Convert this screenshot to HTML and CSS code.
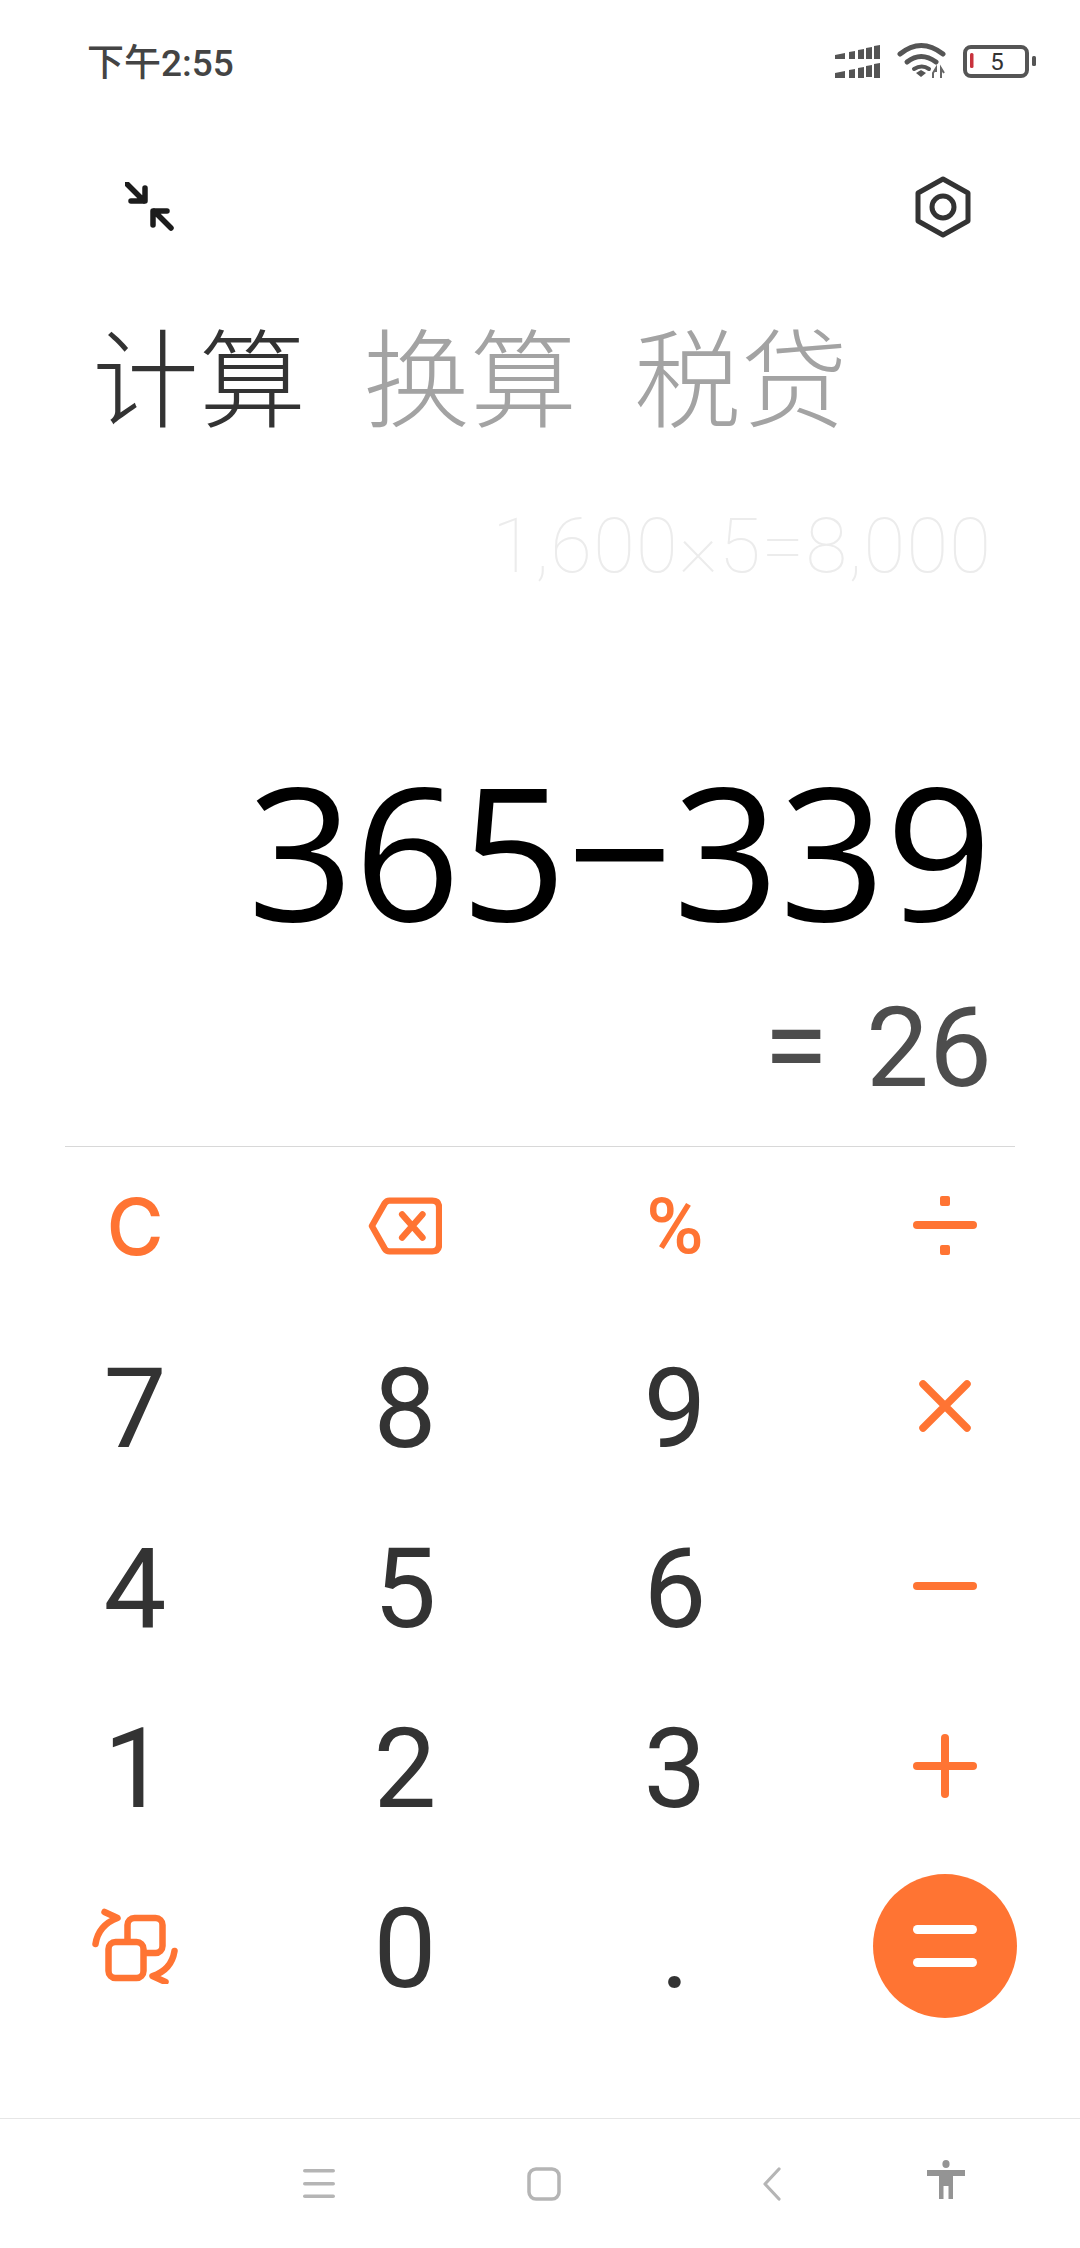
FILE: index.html
```html
<!DOCTYPE html>
<html lang="zh-CN">
<head>
    <meta charset="UTF-8">
    <meta name="viewport" content="width=device-width, initial-scale=1.0">
    <title>计算器</title>
    <link rel="stylesheet" href="styles.css">
</head>
<body>
    <div class="status-bar">
        <div class="status-time">下午2:55</div>
        <svg class="status-icons" width="210" height="40" viewBox="830 42 210 40">
            <!-- 信号 -->
            <g fill="#555">
                <path d="M835 55l10-2v6h-10zM849 52l6-1v8h-6zM858 50l6-1v10h-6zM866 48l6-1v12h-6zM874 46l6-1v14h-6z"/>
                <path d="M835 73l10-2v7h-10zM849 70l6-1v9h-6zM858 68l6-1v11h-6zM866 66l6-1v12h-6zM874 64l6-1v15h-6z"/>
            </g>
            <!-- wifi -->
            <g fill="none" stroke="#555" stroke-width="5" stroke-linecap="round">
                <path d="M900 54q21-17 43 0"/>
                <path d="M907 62q14-11 29 0"/>
                <path d="M914 69q8-5 15 0" stroke-width="4"/>
            </g>
            <path d="M916 73l5-3 5 3-5 4z" fill="#555"/>
            <path d="M936 72v-4l-3 5v5M941 78v-10l3 5" fill="none" stroke="#666" stroke-width="2"/>
            <!-- 电池 -->
            <rect x="965" y="47" width="62" height="29" rx="6" fill="none" stroke="#555" stroke-width="4"/>
            <rect x="970" y="53" width="3.5" height="15" rx="1.5" fill="#c8323c"/>
            <rect x="1032" y="56" width="4" height="10" rx="1.5" fill="#555"/>
            <text x="997" y="70" class="battery-num">5</text>
        </svg>
    </div>

    <div class="toolbar">
        <svg width="50" height="50" viewBox="125 183 50 50" fill="none" stroke="#1c1c1c" stroke-width="5.5" stroke-linecap="round" stroke-linejoin="round">
            <path d="M127 185l17 17M145 189v13h-14"/>
            <path d="M171 229l-17-17M153 226v-14h14"/>
        </svg>
        <svg width="60" height="64" viewBox="0 0 60 64" fill="none" stroke="#333" stroke-linejoin="round">
            <path d="M30 4l25 14v28l-25 14-25-14v-28z" stroke-width="5"/>
            <circle cx="30" cy="32" r="11" stroke-width="5"/>
        </svg>
    </div>

    <div class="tabs">
        <div class="tab active">计算</div>
        <div class="tab">换算</div>
        <div class="tab">税贷</div>
    </div>

    <div class="display">
        <div class="history">1,600×5=8,000</div>
        <div class="expression">365−339</div>
        <div class="result"><span class="result-eq">=</span> 26</div>
    </div>

    <div class="divider"></div>

    <div class="keypad">
        <div class="key op-text">C</div>
        <div class="key">
            <svg width="74" height="60" viewBox="0 0 76 60" fill="none" stroke="#ff7433" stroke-width="6.5" stroke-linejoin="round" stroke-linecap="round" aria-label="退格">
                <path d="M22 4h44q7 0 7 7v38q0 7-7 7h-44q-3 0-5-3l-13-23 13-23q2-3 5-3z"/>
                <path d="M35 18l21 24M56 18l-21 24"/>
            </svg>
        </div>
        <div class="key op-text percent">%</div>
        <div class="key">
            <svg width="64" height="60" viewBox="0 0 64 60" fill="#ff7433" aria-label="÷">
                <rect x="27" y="0" width="10" height="10" rx="2"/>
                <rect x="0" y="25" width="64" height="8" rx="4"/>
                <rect x="27" y="49" width="10" height="10" rx="2"/>
            </svg>
        </div>

        <div class="key num">7</div>
        <div class="key num">8</div>
        <div class="key num">9</div>
        <div class="key">
            <svg width="52" height="52" viewBox="0 0 52 52" stroke="#ff7433" stroke-width="7.5" stroke-linecap="round" aria-label="×">
                <path d="M4 4l44 44M48 4l-44 44"/>
            </svg>
        </div>

        <div class="key num">4</div>
        <div class="key num">5</div>
        <div class="key num">6</div>
        <div class="key">
            <svg width="64" height="8" viewBox="0 0 64 8" aria-label="−">
                <rect width="64" height="8" rx="4" fill="#ff7433"/>
            </svg>
        </div>

        <div class="key num">1</div>
        <div class="key num">2</div>
        <div class="key num">3</div>
        <div class="key">
            <svg width="64" height="64" viewBox="0 0 64 64" fill="#ff7433" aria-label="+">
                <rect y="28" width="64" height="8" rx="4"/>
                <rect x="28" width="8" height="64" rx="4"/>
            </svg>
        </div>

        <div class="key">
            <svg width="90" height="76" viewBox="89.5 1906 90 76" fill="none" stroke="#ff7433" stroke-width="6.5" stroke-linecap="round" stroke-linejoin="round" aria-label="切换">
                <rect x="127" y="1916" width="35" height="35" rx="7"/>
                <rect x="108" y="1940" width="35" height="36" rx="7" fill="#fff"/>
                <path d="M95 1942q3-19 22-26l-13-6"/>
                <path d="M174 1949q-3 19-22 25l13 6"/>
            </svg>
        </div>
        <div class="key num">0</div>
        <div class="key num">.</div>
        <div class="key">
            <div class="equals">
                <svg width="64" height="42" viewBox="0 0 64 42" fill="#fff" aria-label="=">
                    <rect y="0" width="64" height="9" rx="4.5"/>
                    <rect y="33" width="64" height="9" rx="4.5"/>
                </svg>
            </div>
        </div>
    </div>

    <div class="nav-bar">
        <svg width="32" height="30" viewBox="0 0 32 30" fill="#b5b5b5">
            <rect y="0" width="32" height="3.6" rx="1.8"/>
            <rect y="13" width="32" height="3.6" rx="1.8"/>
            <rect y="25.5" width="32" height="3.6" rx="1.8"/>
        </svg>
        <svg width="34" height="34" viewBox="0 0 34 34" fill="none" stroke="#b5b5b5" stroke-width="3.5">
            <rect x="2" y="2" width="30" height="30" rx="7"/>
        </svg>
        <svg width="18" height="34" viewBox="0 0 18 34" fill="none" stroke="#b5b5b5" stroke-width="3.2" stroke-linecap="round" stroke-linejoin="round">
            <path d="M16 2l-14 15 14 15"/>
        </svg>
        <svg class="nav-person" width="38" height="40" viewBox="0 0 38 40" fill="#949494">
            <ellipse cx="19" cy="4" rx="3.6" ry="4"/>
            <path d="M0 10h38v6h-12v23h-4.5v-13h-5v13h-4.5v-23h-12z"/>
        </svg>
    </div>
</body>
</html>
```

FILE: styles.css
```css
* {
    margin: 0;
    padding: 0;
    box-sizing: border-box;
}

body {
    width: 1080px;
    height: 2248px;
    display: flex;
    flex-direction: column;
    background-color: #fff;
    font-family: Roboto, 'Noto Sans CJK SC', sans-serif;
    overflow: hidden;
}

.status-bar {
    height: 124px;
    display: flex;
    justify-content: space-between;
    align-items: center;
    padding: 0 40px 0 87px;
}

.status-time {
    font-size: 37px;
    font-weight: 500;
    color: #444;
    margin-top: -4px;
}

.battery-num {
    font-family: Roboto, sans-serif;
    font-size: 24px;
    fill: #333;
    text-anchor: middle;
}

.toolbar {
    height: 166px;
    display: flex;
    justify-content: space-between;
    align-items: center;
    padding: 0 107px 0 125px;
}

.tabs {
    display: flex;
    gap: 57px;
    padding-left: 92px;
    margin-top: 18px;
}

.tab {
    font-size: 107px;
    font-weight: 300;
    line-height: 130px;
    color: #a3a3a3;
    font-family: 'Noto Sans CJK SC', sans-serif;
}

.tab.active {
    color: #333;
}

.display {
    display: flex;
    flex-direction: column;
    align-items: flex-end;
    padding-right: 88px;
}

.history {
    margin-top: 58px;
    font-size: 76px;
    font-weight: 100;
    line-height: 100px;
    letter-spacing: 1.2px;
    color: #ececec;
}

.expression {
    margin-top: 143px;
    font-family: 'Open Sans', sans-serif;
    font-size: 186px;
    font-weight: 400;
    line-height: 220px;
    color: #000;
}

.result {
    margin-top: 22px;
    font-size: 112px;
    font-weight: 400;
    line-height: 130px;
    color: #4d4d4d;
}

.result-eq {
    font-size: 118px;
    margin-right: 10px;
}

.divider {
    height: 1px;
    margin: 33px 65px 0;
    background-color: #d8d8d8;
}

.keypad {
    display: grid;
    grid-template-columns: repeat(4, 270px);
    grid-auto-rows: 180px;
    margin-top: -11px;
}

.key {
    display: flex;
    justify-content: center;
    align-items: center;
}

.num {
    padding-top: 4px;
    font-size: 112px;
    font-weight: 400;
    color: #333;
}

.op-text {
    font-family: Inter, sans-serif;
    font-size: 78px;
    font-weight: 450;
    color: #ff7433;
}

.percent {
    font-family: Roboto, sans-serif;
    font-weight: 500;
}

.equals {
    width: 144px;
    height: 144px;
    border-radius: 50%;
    background-color: #ff7433;
    display: flex;
    justify-content: center;
    align-items: center;
}

.nav-bar {
    margin-top: auto;
    height: 130px;
    border-top: 1px solid #e6e6e6;
    display: grid;
    grid-template-columns: 225px 225px 231px 117px;
    justify-items: center;
    align-items: center;
    padding-left: 206px;
}

.nav-person {
    margin-top: -8px;
}
```
